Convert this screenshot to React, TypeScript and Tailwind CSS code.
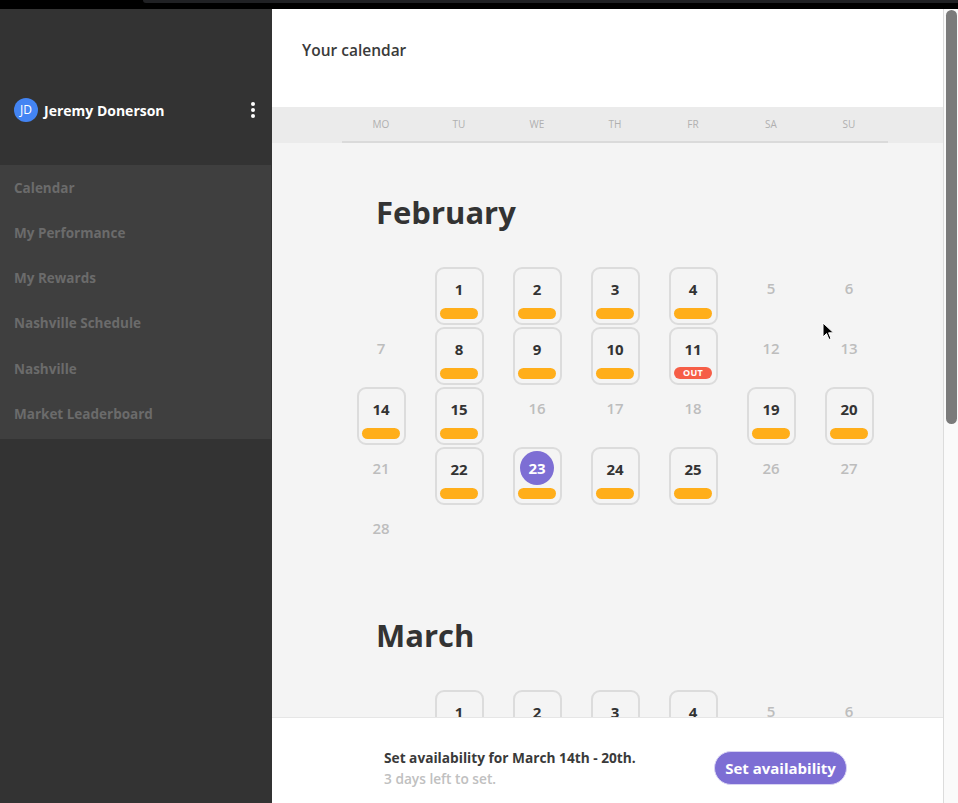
import React from "react";

type Day = { n: number; box?: boolean; today?: boolean; out?: boolean } | null;

const feb: Day[] = [
  null,
  { n: 1, box: true },
  { n: 2, box: true },
  { n: 3, box: true },
  { n: 4, box: true },
  { n: 5 },
  { n: 6 },
  { n: 7 },
  { n: 8, box: true },
  { n: 9, box: true },
  { n: 10, box: true },
  { n: 11, box: true, out: true },
  { n: 12 },
  { n: 13 },
  { n: 14, box: true },
  { n: 15, box: true },
  { n: 16 },
  { n: 17 },
  { n: 18 },
  { n: 19, box: true },
  { n: 20, box: true },
  { n: 21 },
  { n: 22, box: true },
  { n: 23, box: true, today: true },
  { n: 24, box: true },
  { n: 25, box: true },
  { n: 26 },
  { n: 27 },
  { n: 28 },
];

const mar: Day[] = [
  null,
  { n: 1, box: true },
  { n: 2, box: true },
  { n: 3, box: true },
  { n: 4, box: true },
  { n: 5 },
  { n: 6 },
];

const nav = [
  "Calendar",
  "My Performance",
  "My Rewards",
  "Nashville Schedule",
  "Nashville",
  "Market Leaderboard",
];

function Cell({ d }: { d: Day }) {
  if (!d) return <div className="h-[60px]" />;
  if (!d.box) {
    return (
      <div className="h-[60px] flex justify-center">
        <div className="mt-[13px] text-[15px] leading-[18px] font-semibold text-[#bdbdbd]">{d.n}</div>
      </div>
    );
  }
  return (
    <div className="h-[60px] flex justify-center">
      <div className="mt-[1px] w-[49px] h-[58px] rounded-[9px] border-2 border-[#dcdcdc] flex flex-col items-center justify-between pt-[11px] pb-[4px] relative">
        {d.today ? (
          <div className="absolute left-1/2 top-[2px] -translate-x-1/2 w-[34px] h-[34px] rounded-full bg-[#7d6ed4] flex items-center justify-center text-white text-[15px] font-bold">
            {d.n}
          </div>
        ) : null}
        <div className={"text-[15px] leading-[18px] font-bold " + (d.today ? "text-transparent" : "text-[#333333]")}>{d.n}</div>
        {d.out ? (
          <div className="w-[38px] h-[12px] rounded-full bg-[#f65e47] text-white text-[9px] leading-[12px] font-bold text-center tracking-[0.3px]">
            OUT
          </div>
        ) : (
          <div className="w-[38px] h-[11px] rounded-full bg-[#ffae1a]" />
        )}
      </div>
    </div>
  );
}

function Month({ name, days }: { name: string; days: Day[] }) {
  return (
    <div className="pt-[51px]">
      <div className="pl-[34px] text-[31px] leading-[36px] font-bold text-[#333333]">{name}</div>
      <div className="mt-[36px] grid grid-cols-7 w-[546px]">
        {days.map((d, i) => (
          <Cell key={i} d={d} />
        ))}
      </div>
    </div>
  );
}

export default function App() {
  const font = { fontFamily: "'Open Sans', Lato, sans-serif" };
  return (
    <div className="h-[803px] w-[958px] flex flex-col bg-black overflow-hidden relative" style={font}>
      <div className="h-[9px] bg-black relative shrink-0">
        <div className="absolute left-[143px] right-0 top-0 h-[3px] bg-[#202124] rounded-bl-[4px]" />
      </div>
      <div className="flex flex-1 min-h-0">
        {/* Sidebar */}
        <div className="w-[272px] bg-[#333333] flex flex-col shrink-0">
          <div className="h-[156px] flex items-end pb-[43px] pl-[14px] pr-[17px]">
            <div className="flex items-center w-full">
              <div className="w-[24px] h-[24px] rounded-full bg-[#4384f3] text-white text-[12px] flex items-center justify-center font-normal">
                JD
              </div>
              <div className="ml-[6px] text-white text-[14px] font-bold">Jeremy Donerson</div>
              <div className="ml-auto flex flex-col gap-[2px]">
                <div className="w-[4px] h-[4px] rounded-full bg-white" />
                <div className="w-[4px] h-[4px] rounded-full bg-white" />
                <div className="w-[4px] h-[4px] rounded-full bg-white" />
              </div>
            </div>
          </div>
          <div className="bg-[#3f3f3f] w-[271px] py-[1px]">
            {nav.map((n) => (
              <div key={n} className="h-[45.3px] flex items-center pl-[14px] pb-[2px] text-[13.5px] font-bold text-[#6b6b6b]">
                {n}
              </div>
            ))}
          </div>
        </div>
        {/* Main */}
        <div className="w-[671px] bg-[#f4f4f4] flex flex-col shrink-0">
          <div className="h-[98px] bg-white flex items-center pl-[30px] pb-[14px] shrink-0">
            <div className="text-[15.5px] font-semibold text-[#3a3a3a]">Your calendar</div>
          </div>
          <div className="h-[36px] bg-[#ebebeb] pl-[70px] shrink-0">
            <div className="w-[546px] h-full grid grid-cols-7 border-b-2 border-[#dadada]">
              {["MO", "TU", "WE", "TH", "FR", "SA", "SU"].map((w) => (
                <div key={w} className="flex items-center justify-center text-[10px] text-[#b0b0b0]">
                  {w}
                </div>
              ))}
            </div>
          </div>
          <div className="flex-1 min-h-0 overflow-hidden pl-[70px]">
            <Month name="February" days={feb} />
            <Month name="March" days={mar} />
          </div>
          <div className="h-[86px] bg-white border-t border-[#e6e6e6] flex items-center justify-between pt-[15px] pl-[112px] pr-[96px] shrink-0">
            <div className="flex flex-col">
              <div className="text-[13.7px] leading-[21px] font-bold text-[#3a3a3a]">Set availability for March 14th - 20th.</div>
              <div className="text-[13.7px] leading-[21px] font-semibold text-[#c0c0c0]">3 days left to set.</div>
            </div>
            <button className="w-[133px] h-[34px] rounded-full bg-[#7d6ed4] border border-[#d8d3f3] text-white text-[15px] font-bold">
              Set availability
            </button>
          </div>
        </div>
        {/* Scrollbar */}
        <div className="w-[15px] bg-[#fafafa] border-l border-[#dcdcdc] pt-[1px] pl-[2px] shrink-0">
          <div className="w-[11px] h-[414px] rounded-full bg-[#7b7b7b]" />
        </div>
      </div>
      {/* cursor */}
      <svg className="absolute left-[822px] top-[322px]" width="13" height="20" viewBox="0 0 13 20">
        <path d="M1 1 L1 15 L4.5 11.5 L7 17.5 L9 16.6 L6.6 10.8 L11.5 10.8 Z" fill="#000" stroke="#fff" strokeWidth="1" />
      </svg>
    </div>
  );
}
